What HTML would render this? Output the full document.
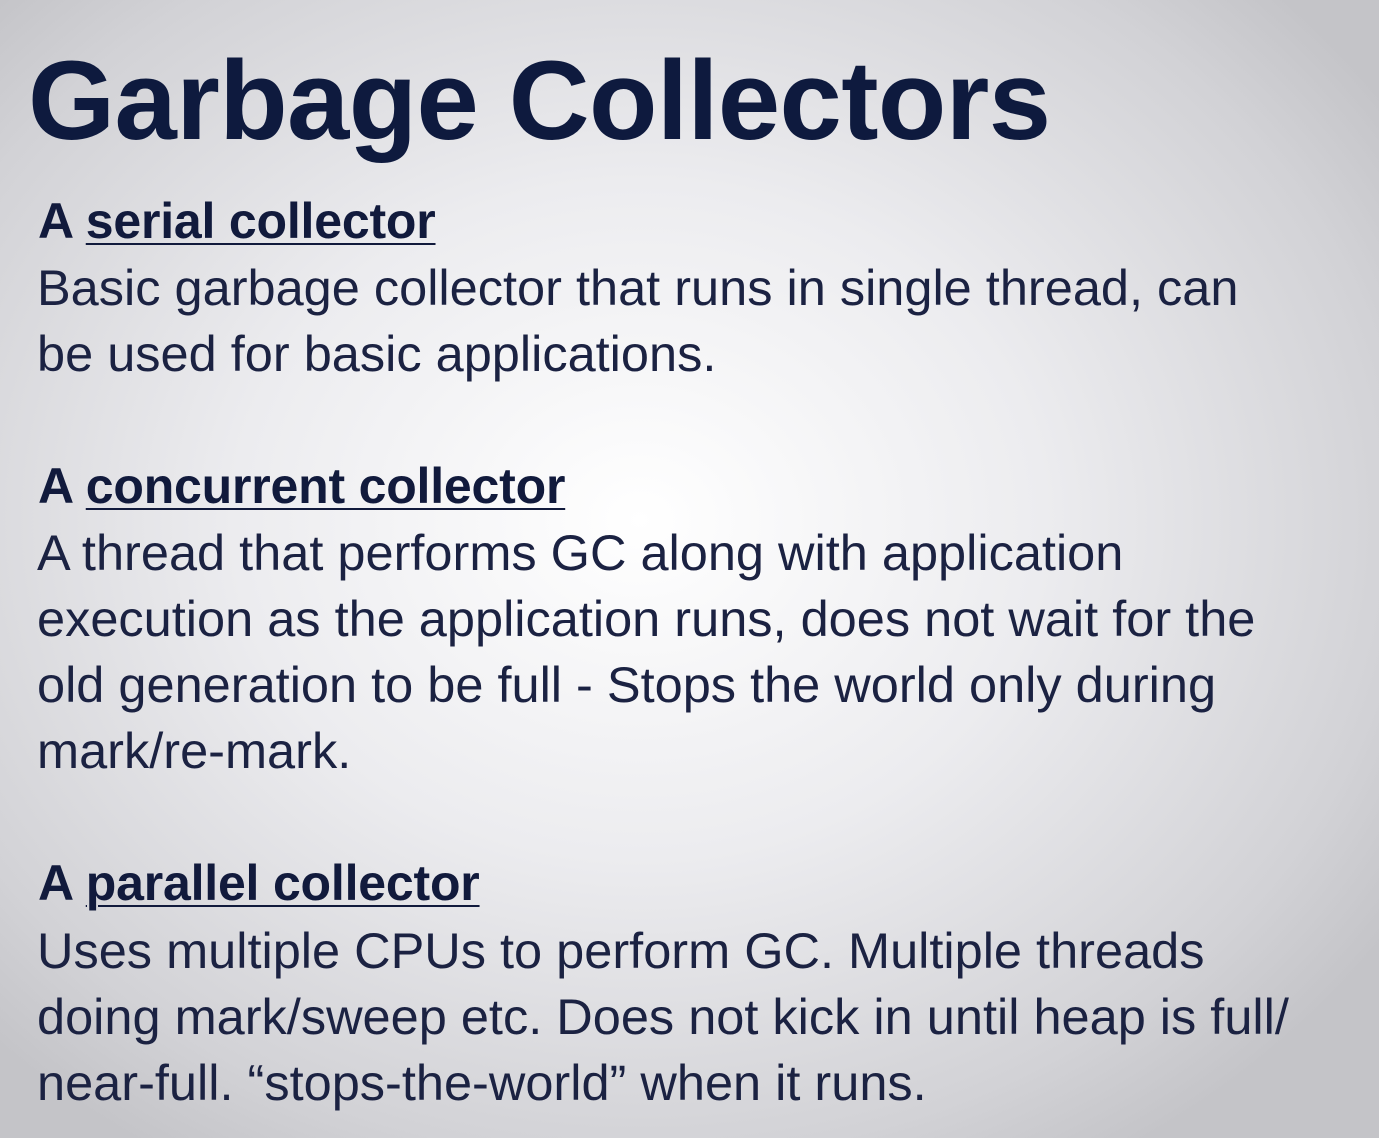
<!DOCTYPE html>
<html><head><meta charset="utf-8"><style>
html,body{margin:0;padding:0}
body{width:1379px;height:1138px;overflow:hidden;position:relative;
background:radial-gradient(ellipse 900px 750px at 640px 520px,#ffffff 0%,#ececef 45%,#d2d2d6 85%,#c4c4c8 100%);
font-family:"Liberation Sans",Arial,sans-serif;color:#17203f}
.t{position:absolute;left:28px;top:45px;font-size:112px;line-height:112px;font-weight:bold;color:#0e1a3e;letter-spacing:-0.6px;white-space:nowrap}
.h{position:absolute;left:38px;font-size:50px;line-height:50px;font-weight:bold;letter-spacing:-0.2px;white-space:nowrap;color:#111a3c}
.h u{text-decoration-thickness:2px;text-underline-offset:5px}
.b{position:absolute;left:37px;font-size:50.5px;line-height:66px;white-space:nowrap;color:#1b2242}
</style></head><body>
<div class="t">Garbage Collectors</div>
<div class="h" style="top:196px">A <u>serial collector</u></div>
<div class="b" style="top:255px">Basic garbage collector that runs in single thread, can<br>be used for basic applications.</div>
<div class="h" style="top:461px">A <u>concurrent collector</u></div>
<div class="b" style="top:520px">A thread that performs GC along with application<br>execution as the application runs, does not wait for the<br>old generation to be full - Stops the world only during<br>mark/re-mark.</div>
<div class="h" style="top:858px">A <u>parallel collector</u></div>
<div class="b" style="top:918px">Uses multiple CPUs to perform GC. Multiple threads<br>doing mark/sweep etc. Does not kick in until heap is full/<br>near-full. “stops-the-world” when it runs.</div>
</body></html>
